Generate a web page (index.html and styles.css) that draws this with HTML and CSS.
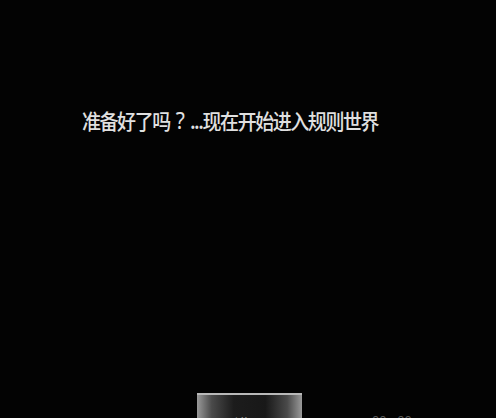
FILE: index.html
```html
<!DOCTYPE html>
<html lang="zh">
<head>
<meta charset="utf-8">
<link rel="stylesheet" href="styles.css">
</head>
<body>
<main class="screen">
  <p class="intro">准备好了吗<span class="qmark">?</span>...现在开始进入规则世界</p>
  <div class="bottom">
    <div class="spacer"></div>
    <button class="enter">进入</button>
    <div class="timer">00 : 00</div>
  </div>
</main>
</body>
</html>
```
FILE: styles.css
```css
html, body {
  margin: 0;
  padding: 0;
  background: #030303;
}
.screen {
  width: 496px;
  height: 418px;
  overflow: hidden;
  display: flex;
  flex-direction: column;
  font-family: "Noto Sans CJK SC", "Noto Sans", sans-serif;
}
.intro {
  margin: 0;
  padding: 96px 0 0 82px;
  font-size: 19px;
  line-height: 26px;
  letter-spacing: -1.45px;
  font-weight: 500;
  color: #e0e0e0;
  transform: scaleY(1.1);
  transform-origin: left top;
}
.qmark {
  font-family: "Noto Sans", sans-serif;
  font-weight: 400;
  font-size: 21px;
  letter-spacing: 0;
  margin: 0 5px 0 6px;
}
.bottom {
  margin-top: 271px;
  display: grid;
  grid-template-columns: 197px 105px 1fr;
  align-items: start;
}
.enter {
  height: 44px;
  padding: 15px 0 0;
  margin: 0;
  border: 0;
  border-top: 2px solid #b9b9b9;
  background: linear-gradient(to right, #9a9a9a 0%, #4a4a4a 14%, #1c1c1c 35%, #181818 65%, #4a4a4a 86%, #9a9a9a 100%);
  color: #f0f0f0;
  font-family: "Noto Sans CJK SC", "Noto Sans", sans-serif;
  font-size: 15px;
  line-height: 20px;
  text-align: center;
}
.timer {
  padding: 19px 0 0 70px;
  font-size: 13px;
  line-height: 18px;
  color: #5a5a5a;
  font-family: "Liberation Sans", sans-serif;
}
```
